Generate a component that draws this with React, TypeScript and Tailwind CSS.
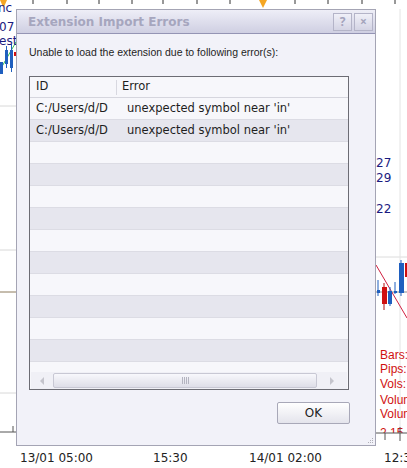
import { ReactNode } from 'react';

const rows = Array.from({ length: 13 }, (_, i) => i);
const errors = [
  { id: 'C:/Users/d/Documents/ext.lua', msg: "unexpected symbol near 'in'" },
  { id: 'C:/Users/d/Documents/ext2.lua', msg: "unexpected symbol near 'in'" },
];

function ChartBackground() {
  const ticks = [33, 67, 99, 132, 163, 197, 230, 295, 328, 362, 395];
  return (
    <svg className="absolute inset-0" width={407} height={468} viewBox="0 0 407 468">
      {/* top time strip */}
      {ticks.map(x => (
        <line key={x} x1={x} y1={0} x2={x} y2={4} stroke="#333" strokeWidth={1} />
      ))}
      <polygon points="0,0 7,0 3.5,8" fill="#f5a623" />
      <polygon points="259,0 267,0 263,8" fill="#f5a623" />

      {/* grid lines */}
      <line x1={0} y1={106} x2={16} y2={106} stroke="#d8d8d8" />
      <line x1={0} y1={250} x2={16} y2={250} stroke="#d8d8d8" />
      <line x1={0} y1={292} x2={16} y2={292} stroke="#8c7a5c" />
      <line x1={0} y1={393} x2={16} y2={393} stroke="#d8d8d8" />
      <line x1={0} y1={432} x2={16} y2={432} stroke="#555" />
      <line x1={376} y1={257} x2={407} y2={257} stroke="#dcdcdc" />
      <line x1={376} y1={292} x2={407} y2={292} stroke="#8c8c8c" />
      <line x1={400} y1={9} x2={400} y2={432} stroke="#e4e4e4" />
      <line x1={13} y1={426} x2={13} y2={432} stroke="#555" />

      {/* left candles */}
      <line x1={0} y1={70} x2={16} y2={42} stroke="#2fbf4f" />
      <rect x={0} y={62} width={3} height={12} fill="#1f5fbf" />
      <rect x={5} y={50} width={3} height={14} fill="#1f5fbf" />
      <line x1={6.5} y1={46} x2={6.5} y2={68} stroke="#1f5fbf" />
      <rect x={10} y={50} width={3} height={18} fill="#1f5fbf" />
      <line x1={11.5} y1={44} x2={11.5} y2={72} stroke="#1f5fbf" />
      <rect x={14} y={52} width={2} height={4} fill="#d01010" />

      {/* right candles */}
      <line x1={376} y1={265} x2={407} y2={318} stroke="#d02040" />
      <line x1={378} y1={280} x2={378} y2={296} stroke="#1f5fbf" />
      <rect x={377} y={290} width={3} height={3} fill="#1f5fbf" />
      <line x1={384} y1={283} x2={384} y2={310} stroke="#b01010" />
      <rect x={382} y={287} width={5} height={17} fill="#d01010" />
      <line x1={390} y1={287} x2={390} y2={306} stroke="#1f5fbf" />
      <rect x={388} y={291} width={4} height={13} fill="#1f5fbf" />
      <line x1={395} y1={282} x2={395} y2={294} stroke="#1f5fbf" />
      <rect x={394} y={291} width={3} height={2} fill="#1f5fbf" />
      <line x1={401} y1={260} x2={401} y2={296} stroke="#1f5fbf" />
      <rect x={399} y={263} width={5} height={30} fill="#1f5fbf" />
      <rect x={405} y={263} width={2} height={14} fill="#d01010" />

      <g fontFamily="'DejaVu Sans', sans-serif" fontSize={12}>
        <text x={-2} y={12} fill="#1a1a80">nc</text>
        <text x={-1} y={31} fill="#1a1a80">07</text>
        <text x={-1} y={45} fill="#1a1a80">est</text>
        <text x={376} y={167} fill="#1a1a80">27</text>
        <text x={376} y={182} fill="#1a1a80">29</text>
        <text x={376} y={213} fill="#1a1a80">22</text>
      </g>
      <g fontFamily="'Liberation Sans', Arial, sans-serif" fontSize={12} fill="#d01010">
        <text x={380} y={359}>Bars:</text>
        <text x={380} y={373}>Pips:</text>
        <text x={380} y={388}>Vols:</text>
        <text x={380} y={404}>Volum</text>
        <text x={380} y={418}>Volum</text>
        <text x={380} y={437}>2.15</text>
      </g>
      <rect x={376} y={433} width={31} height={35} fill="#fff" />
      <line x1={376} y1={433} x2={407} y2={433} stroke="#555" />
      <line x1={385} y1={433} x2={385} y2={440} stroke="#555" />
      <line x1={400} y1={427} x2={400} y2={441} stroke="#555" />
      <g fontFamily="'DejaVu Sans', sans-serif" fontSize={12} fill="#222">
        <text x={20} y={462}>13/01 05:00</text>
        <text x={153} y={462}>15:30</text>
        <text x={249} y={462}>14/01 02:00</text>
        <text x={384} y={462}>12:3</text>
      </g>
    </svg>
  );
}

function TitleButton({ children }: { children: ReactNode }) {
  return (
    <div className="w-[19px] h-[18px] border border-[#b4b4c8] bg-gradient-to-b from-[#f0f0f8] to-[#d4d4e4] flex items-center justify-center text-[12px] font-bold text-[#a4a4bc] leading-none">
      {children}
    </div>
  );
}

function ScrollBar() {
  return (
    <div className="h-[17px] flex items-stretch mx-px bg-[#f0f0f6]">
      <div className="w-[22px] flex items-center justify-center">
        <div className="w-0 h-0 border-y-[4px] border-y-transparent border-r-[4px] border-r-[#c4c4cc]" />
      </div>
      <div className="flex-1 my-[1px] rounded-[2px] border border-[#c8c8d4] bg-gradient-to-b from-[#f8f8fc] to-[#dedee8] flex items-center justify-center gap-[1px]">
        <div className="w-px h-[7px] bg-[#b4b4c0]" />
        <div className="w-px h-[7px] bg-[#b4b4c0]" />
        <div className="w-px h-[7px] bg-[#b4b4c0]" />
        <div className="w-px h-[7px] bg-[#b4b4c0]" />
      </div>
      <div className="w-[30px] flex items-center justify-center">
        <div className="w-0 h-0 border-y-[4px] border-y-transparent border-l-[4px] border-l-[#c4c4cc]" />
      </div>
    </div>
  );
}

function ErrorTable() {
  return (
    <div className="w-[320px] h-[314px] border border-[#6c6c74] bg-[#f7f7fb] flex flex-col overflow-hidden font-['DejaVu_Sans',sans-serif] text-[11.5px] text-[#1e1e1e]">
      <div className="h-[21px] flex items-center border-b border-[#d6d6de] shrink-0">
        <div className="w-[87px] pl-[6px] border-r border-[#d8d8e0] h-[15px] flex items-center">ID</div>
        <div className="pl-[5px]">Error</div>
      </div>
      <div className="flex-1 overflow-hidden">
        {rows.map(i => {
          const err = errors[i];
          return (
            <div
              key={i}
              className={`h-[22px] flex items-center border-b border-[#dcdce4] ${i % 2 === 1 ? 'bg-[#e6e6ee]' : 'bg-[#f7f7fb]'}`}
            >
              {err && (
                <>
                  <div className="w-[87px] pl-[6px] overflow-hidden whitespace-nowrap">{err.id.slice(0, 12)}</div>
                  <div className="pl-[10px] whitespace-nowrap">{err.msg}</div>
                </>
              )}
            </div>
          );
        })}
      </div>
      <ScrollBar />
    </div>
  );
}

export default function App() {
  return (
    <div className="relative w-[407px] h-[468px] bg-white overflow-hidden">
      <ChartBackground />
      <div className="absolute left-[16px] top-[9px] w-[360px] h-[437px] border border-[#a4a4b4] bg-[#f2f2f9] flex flex-col">
        <div className="h-[24px] shrink-0 flex items-center justify-between pl-[11px] pr-[2px] bg-gradient-to-b from-[#eeeef7] to-[#cfcfe2] border-b border-[#9494b4]">
          <span className="font-['DejaVu_Sans',sans-serif] font-bold text-[12px] text-[#a6a6be]">Extension Import Errors</span>
          <div className="flex gap-[2px]">
            <TitleButton>?</TitleButton>
            <TitleButton>×</TitleButton>
          </div>
        </div>
        <div className="flex-1 flex flex-col px-[12px] relative">
          <p className="mt-[11px] mb-[17px] font-['Liberation_Sans',Arial,sans-serif] text-[10.5px] text-[#1e1e1e] leading-[14px]">
            Unable to load the extension due to following error(s):
          </p>
          <ErrorTable />
          <div className="flex justify-end mt-[12px] pr-[13px]">
            <button className="w-[73px] h-[22px] rounded-[2px] border border-[#a8a8b8] bg-gradient-to-b from-white to-[#e4e4ec] font-['DejaVu_Sans',sans-serif] text-[12px] text-[#1e1e1e]">
              OK
            </button>
          </div>
          <div className="absolute right-[2px] bottom-[2px] grid grid-cols-3 gap-[1px]">
            <div />
            <div />
            <div className="w-px h-px bg-[#b0b0b8]" />
            <div />
            <div className="w-px h-px bg-[#b0b0b8]" />
            <div className="w-px h-px bg-[#b0b0b8]" />
            <div className="w-px h-px bg-[#b0b0b8]" />
            <div className="w-px h-px bg-[#b0b0b8]" />
            <div className="w-px h-px bg-[#b0b0b8]" />
          </div>
        </div>
      </div>
    </div>
  );
}
